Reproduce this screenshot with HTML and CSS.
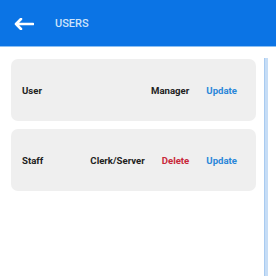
FILE: index.html
```html
<!doctype html>
<html lang="en">

<head>
  <meta charset="UTF-8">
  <title>Users</title>
  <link rel="stylesheet" href="styles.css">
</head>

<body>
  <!-- Top bar -->
  <header class="topbar">
    <svg class="back" width="20" height="12" viewBox="0 0 20 12">
      <path d="M19 6H2M7 1L2 6l5 5" fill="none" stroke="#fff" stroke-width="2.6" stroke-linecap="round" stroke-linejoin="round" />
    </svg>
    <span class="title">USERS</span>
  </header>

  <!-- User list -->
  <main class="content">
    <div class="list">
      <div class="card">
        <span class="name">User</span>
        <span class="role">Manager</span>
        <span class="action update">Update</span>
      </div>
      <div class="card">
        <span class="name">Staff</span>
        <span class="role">Clerk/Server</span>
        <span class="action delete">Delete</span>
        <span class="action update">Update</span>
      </div>
    </div>
    <div class="scrollbar"></div>
  </main>
</body>

</html>
```

FILE: styles.css
```css
html,
body {
  margin: 0;
  height: 100%;
  background-color: #fff;
  font-family: Roboto, "Liberation Sans", sans-serif;
}

/* Top bar */

.topbar {
  display: flex;
  align-items: center;
  height: 46px;
  padding-left: 14px;
  background-color: #0b74e5;
  border-bottom: 1px solid #8cc0f3;
  box-sizing: content-box;
}

.back {
  display: block;
  margin-top: 1px;
}

.title {
  margin-left: 21px;
  margin-top: 1px;
  font-size: 11px;
  font-weight: 500;
  color: #cde3fb;
}

/* List area */

.content {
  display: flex;
  gap: 8px;
  padding: 11px 0 0 11px;
  height: calc(100% - 58px);
}

.list {
  display: flex;
  flex-direction: column;
  gap: 8px;
  width: 245px;
  padding-top: 1px;
}

.card {
  display: flex;
  align-items: center;
  gap: 17px;
  height: 62px;
  padding: 0 19px 0 11px;
  background-color: #efefef;
  border-radius: 7px;
  font-size: 9.6px;
  font-weight: 700;
  color: #222;
}

.name {
  flex: 1;
}

.delete {
  color: #c8283a;
}

.update {
  color: #2a87d9;
}

.scrollbar {
  width: 3px;
  background-color: #c6ddf6;
  border-left: 1px solid #a9cbf0;
}
```
